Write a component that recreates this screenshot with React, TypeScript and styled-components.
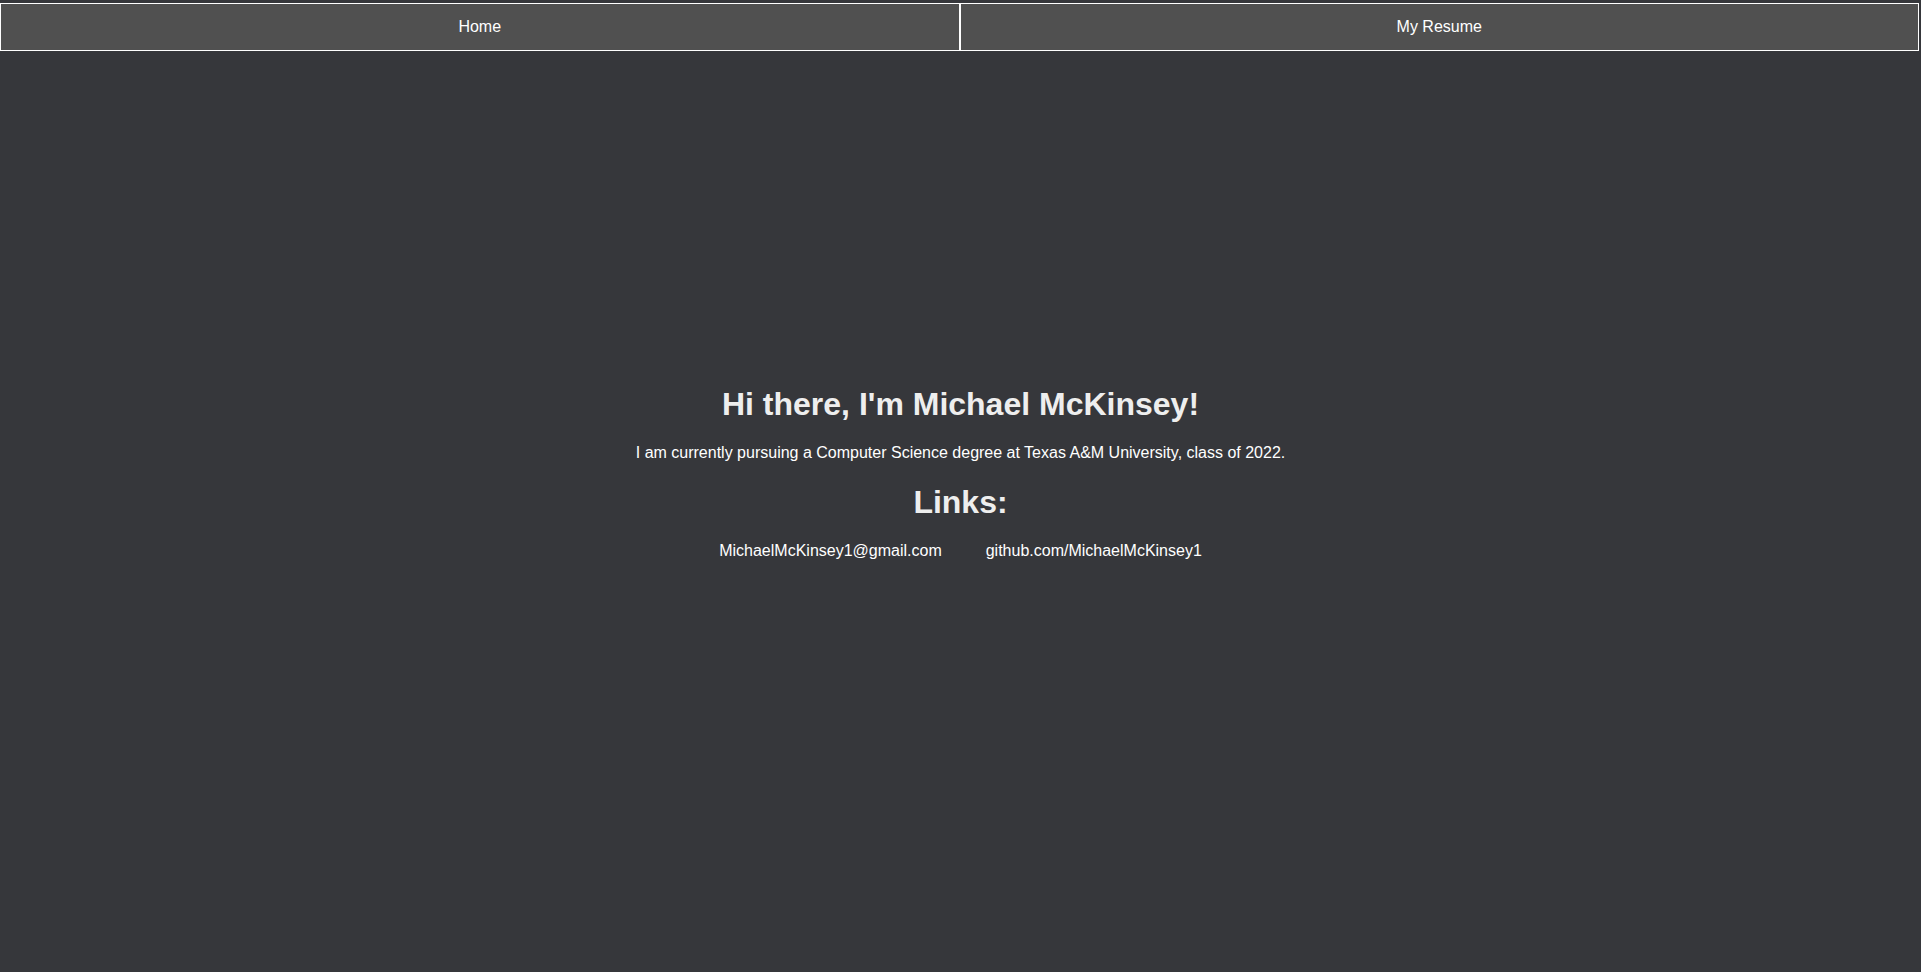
import React from "react";
import styled, { createGlobalStyle } from "styled-components";

const GlobalStyle = createGlobalStyle`
  html, body {
    margin: 0;
    padding: 0;
    background: #36373b;
    font-family: "Liberation Sans", Arial, sans-serif;
  }
`;

const Page = styled.div`
  min-height: 100vh;
  background: #36373b;
  padding-top: 3px;
  box-sizing: border-box;
`;

const Nav = styled.nav`
  display: flex;
  width: calc(100% - 2px);
`;

const NavButton = styled.a`
  flex: 1 1 50%;
  height: 48px;
  display: flex;
  align-items: center;
  justify-content: center;
  background: #505050;
  border: 1px solid #ffffff;
  color: #ffffff;
  font-size: 16px;
  text-decoration: none;
  box-sizing: border-box;
  cursor: pointer;
`;

const Main = styled.main`
  display: flex;
  flex-direction: column;
  align-items: center;
  padding-top: 335px;
  color: #ffffff;
  text-align: center;
`;

const Heading = styled.h1`
  margin: 0;
  font-size: 32px;
  line-height: 37px;
  font-weight: bold;
  color: #eeeeee;
`;

const Intro = styled.p`
  margin: 21px 0 0;
  font-size: 16px;
  line-height: 18px;
  color: #ffffff;
`;

const SubHeading = styled.h2`
  margin: 22px 0 0;
  font-size: 32px;
  line-height: 37px;
  font-weight: bold;
  color: #eeeeee;
`;

const LinkRow = styled.div`
  display: flex;
  gap: 44px;
  margin-top: 21px;
`;

const LinkItem = styled.a`
  color: #ffffff;
  font-size: 16px;
  line-height: 18px;
  text-decoration: none;
`;

export default function App() {
  return (
    <>
      <GlobalStyle />
      <Page>
        <Nav>
          <NavButton>Home</NavButton>
          <NavButton>My Resume</NavButton>
        </Nav>
        <Main>
          <Heading>Hi there, I'm Michael McKinsey!</Heading>
          <Intro>
            I am currently pursuing a Computer Science degree at Texas A&amp;M University, class of 2022.
          </Intro>
          <SubHeading>Links:</SubHeading>
          <LinkRow>
            <LinkItem>MichaelMcKinsey1@gmail.com</LinkItem>
            <LinkItem>github.com/MichaelMcKinsey1</LinkItem>
          </LinkRow>
        </Main>
      </Page>
    </>
  );
}
